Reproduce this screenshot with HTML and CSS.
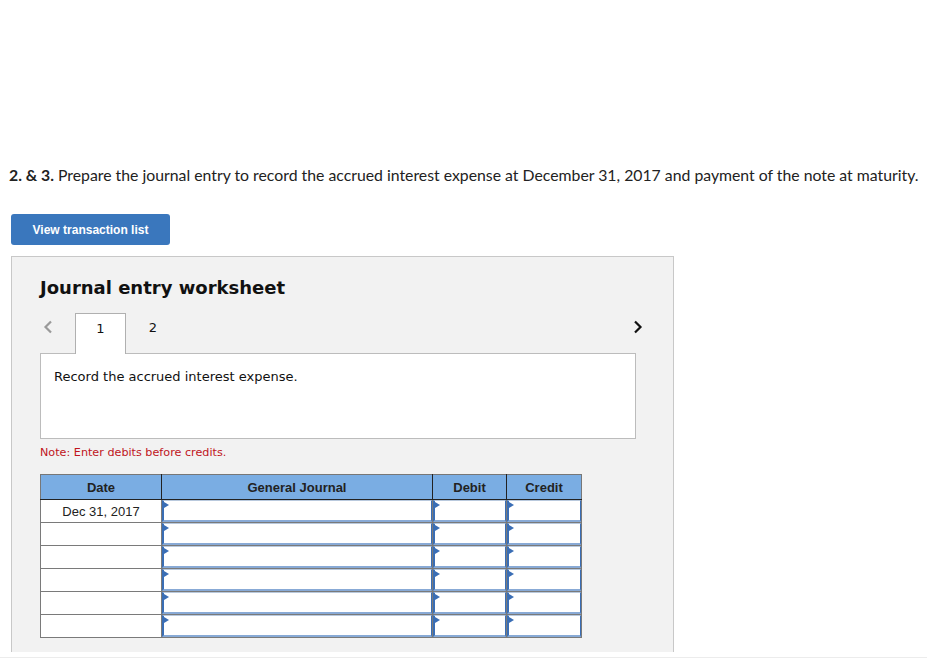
FILE: index.html
```html
<!DOCTYPE html>
<html>
<head>
<meta charset="utf-8">
<link rel="stylesheet" href="styles.css">
</head>
<body>
<div class="page">
  <p class="question"><b>2. &amp; 3.</b> Prepare the journal entry to record the accrued interest expense at December 31, 2017 and payment of the note at maturity.</p>
  <button class="btn">View transaction list</button>
  <div class="panel">
    <h3 class="title">Journal entry worksheet</h3>
    <div class="tabs">
      <span class="arrow left">
        <svg width="10" height="14" viewBox="0 0 10 14"><path d="M8 1.5 L2.5 7 L8 12.5" fill="none" stroke="#9a9a9a" stroke-width="2.2"/></svg>
      </span>
      <span class="tab active">1</span>
      <span class="tab second">2</span>
      <span class="spacer"></span>
      <span class="arrow right">
        <svg width="10" height="14" viewBox="0 0 10 14"><path d="M2 1.5 L7.5 7 L2 12.5" fill="none" stroke="#111" stroke-width="2.2"/></svg>
      </span>
    </div>
    <div class="box">Record the accrued interest expense.</div>
    <p class="note">Note: Enter debits before credits.</p>
    <table class="journal">
      <thead>
        <tr><th class="c-date">Date</th><th class="c-gj">General Journal</th><th class="c-dr">Debit</th><th class="c-cr">Credit</th></tr>
      </thead>
      <tbody>
        <tr><td class="date">Dec 31, 2017</td><td class="in"><div class="fld"></div></td><td class="in"><div class="fld"></div></td><td class="in"><div class="fld"></div></td></tr>
        <tr><td class="date"></td><td class="in"><div class="fld"></div></td><td class="in"><div class="fld"></div></td><td class="in"><div class="fld"></div></td></tr>
        <tr><td class="date"></td><td class="in"><div class="fld"></div></td><td class="in"><div class="fld"></div></td><td class="in"><div class="fld"></div></td></tr>
        <tr><td class="date"></td><td class="in"><div class="fld"></div></td><td class="in"><div class="fld"></div></td><td class="in"><div class="fld"></div></td></tr>
        <tr><td class="date"></td><td class="in"><div class="fld"></div></td><td class="in"><div class="fld"></div></td><td class="in"><div class="fld"></div></td></tr>
        <tr><td class="date"></td><td class="in"><div class="fld"></div></td><td class="in"><div class="fld"></div></td><td class="in"><div class="fld"></div></td></tr>
      </tbody>
    </table>
  </div>
  <div class="footer-line"></div>
</div>
</body>
</html>
```

FILE: styles.css
```css
html, body {
  margin: 0;
  padding: 0;
  background: #fff;
}
.page {
  width: 927px;
  height: 669px;
  overflow: hidden;
  padding-top: 165px;
  box-sizing: border-box;
}
.question {
  margin: 0 0 0 9px;
  font-family: "Lato", "Open Sans", sans-serif;
  font-size: 15.8px;
  line-height: 20px;
  color: #222;
  white-space: nowrap;
}
.question b {
  font-weight: 700;
}
.btn {
  display: block;
  margin: 29px 0 0 11px;
  width: 159px;
  height: 31px;
  border: none;
  border-radius: 3px;
  background: #3a77bd;
  color: #fff;
  font-family: "Liberation Sans", Arial, sans-serif;
  font-weight: 700;
  font-size: 12px;
  padding: 0;
}
.panel {
  margin: 11px 0 0 11px;
  width: 663px;
  height: 396px;
  box-sizing: border-box;
  background: #f2f2f2;
  border: 1px solid #c8c8c8;
  border-bottom: none;
  padding: 20px 0 0 28px;
}
.title {
  margin: 0;
  font-family: "DejaVu Sans", Verdana, sans-serif;
  font-weight: 700;
  font-size: 18px;
  line-height: 22px;
  color: #111;
}
.tabs {
  display: flex;
  align-items: stretch;
  height: 40px;
  margin-top: 14px;
  width: 606px;
  font-family: "DejaVu Sans", Verdana, sans-serif;
  font-size: 13px;
  color: #111;
}
.arrow {
  display: flex;
  align-items: center;
  justify-content: center;
  width: 16px;
  padding-bottom: 12px;
}
.arrow.left {
  margin-right: 19px;
}
.tab {
  width: 51px;
  display: flex;
  align-items: center;
  justify-content: center;
  padding-bottom: 12px;
  box-sizing: border-box;
}
.tab.second {
  padding-left: 3px;
}
.tab.active {
  background: #fff;
  border: 1px solid #b0b0b0;
  border-bottom: none;
  position: relative;
  z-index: 1;
  margin-bottom: -1px;
  padding-bottom: 11px;
}
.spacer {
  flex: 1;
}
.box {
  width: 596px;
  height: 86px;
  box-sizing: border-box;
  background: #fff;
  border: 1px solid #bcbcbc;
  padding: 15px 0 0 13px;
  font-family: "DejaVu Sans", Verdana, sans-serif;
  font-size: 13px;
  line-height: 16px;
  color: #111;
}
.note {
  margin: 6px 0 0 0;
  font-family: "DejaVu Sans", Verdana, sans-serif;
  font-size: 11.2px;
  line-height: 16px;
  color: #c0141c;
}
.journal {
  margin-top: 13px;
  border-collapse: collapse;
  font-family: "Liberation Sans", Arial, sans-serif;
  font-size: 13px;
  color: #222;
}
.journal th {
  background: #7aade3;
  height: 24px;
  padding: 0;
  font-weight: 700;
  border: 1px solid #222;
  border-top: 1px solid #777;
  border-bottom: 1px solid #222;
}
.journal th.c-date { border-left: 1px solid #777; }
.journal th.c-cr { border-right: 1px solid #777; }
.c-date { width: 120px; }
.c-gj { width: 270px; }
.c-dr { width: 73px; }
.c-cr { width: 74px; }
.journal td {
  height: 22px;
  padding: 0;
  border: 1px solid #7a7a7a;
  background: #fff;
}
.journal td.date {
  text-align: center;
  vertical-align: middle;
  font-size: 13px;
}
.journal td.in {
  position: relative;
  border-left: 1px solid #555;
}
.fld {
  position: absolute;
  left: 0;
  top: 0;
  right: 0;
  bottom: 0;
  box-sizing: border-box;
  border-left: 2px solid #3a6eb5;
  border-right: 1px solid #3a6eb5;
  border-top: 1px solid #b9c9dd;
  border-bottom: 2px solid #88aad6;
  background: #fff;
}
.fld::before {
  content: "";
  position: absolute;
  left: 0;
  top: 1px;
  border-style: solid;
  border-width: 3.5px 0 3.5px 5px;
  border-color: transparent transparent transparent #3a6eb5;
}
.footer-line {
  margin-top: 5px;
  border-top: 1px solid #ececec;
  height: 10px;
}
```
